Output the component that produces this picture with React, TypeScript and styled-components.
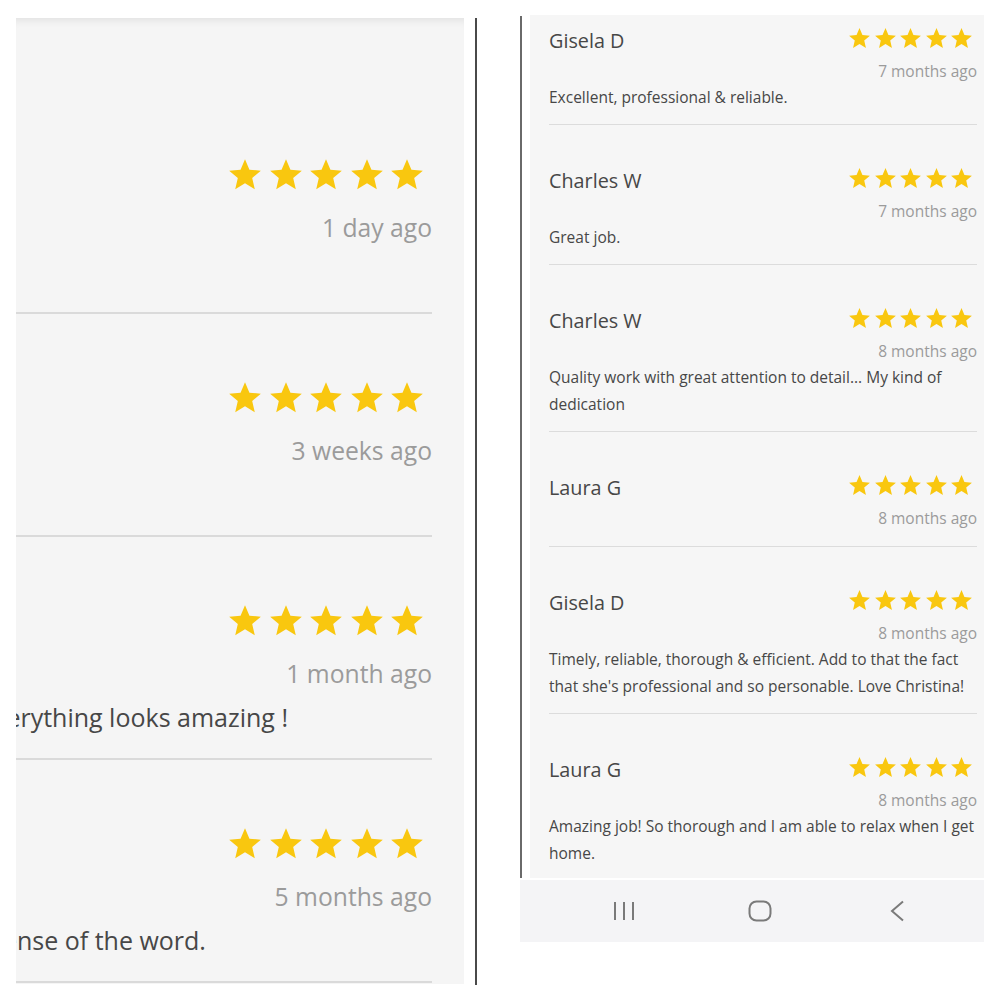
import styled, { createGlobalStyle } from "styled-components";

const GlobalStyle = createGlobalStyle`
  body {
    margin: 0;
    background: #ffffff;
    font-family: "Open Sans", "Noto Sans", sans-serif;
  }
`

const Page = styled.div`
  display: flex;
  height: 1000px;
  background: #ffffff;
  overflow: hidden;
`

// left screenshot (zoomed in, cut on the left)
const LeftPanel = styled.section`
  margin: 18px 0 0 16px;
  width: 448px;
  height: 966px;
  background: #f5f5f5;
  box-shadow: inset 0 9px 8px -7px rgba(0, 0, 0, 0.09);
  overflow: hidden;
`

const LeftList = styled.div`
  margin-left: -36px;
  padding: 73px 32px 0 0;
`

const LeftRow = styled.div`
  padding: 64px 0 21px;
  border-bottom: 2px solid #dadada;
`

const Rule = styled.div<{ $top: number; $height: number; $color: string }>`
  flex: none;
  width: 2px;
  margin-top: ${(p) => p.$top}px;
  height: ${(p) => p.$height}px;
  background: ${(p) => p.$color};
`

const Gap = styled.div<{ $w: number }>`
  flex: none;
  width: ${(p) => p.$w}px;
`

const StarRow = styled.div<{ $size: number; $gap: number; $right: number; $big?: boolean }>`
  display: flex;
  align-items: center;
  justify-content: flex-end;
  gap: ${(p) => p.$gap}px;
  margin-right: ${(p) => p.$right}px;
  height: ${(p) => (p.$big ? 40 : 25)}px;
  margin-bottom: ${(p) => (p.$big ? 0 : 4)}px;
  svg {
    width: ${(p) => p.$size}px;
    height: ${(p) => p.$size}px;
    fill: #f9c70f;
    display: block;
  }
`

const Time = styled.div<{ $big?: boolean }>`
  text-align: right;
  color: #9b9b9b;
  font-size: ${(p) => (p.$big ? 24.7 : 15.5)}px;
  line-height: ${(p) => (p.$big ? 36 : 24)}px;
  margin-top: ${(p) => (p.$big ? 15 : 5)}px;
`

const Body = styled.div<{ $big?: boolean; $indent?: number }>`
  color: #474747;
  font-size: ${(p) => (p.$big ? 25 : 15.5)}px;
  line-height: ${(p) => (p.$big ? 40 : 27)}px;
  min-height: ${(p) => (p.$big ? 40 : 0)}px;
  margin-top: ${(p) => (p.$big ? 5 : 1)}px;
  white-space: ${(p) => (p.$big ? "nowrap" : "normal")};
  text-indent: ${(p) => p.$indent ?? 0}px;
`

// right screenshot
const RightColumn = styled.div`
  flex: none;
  width: 464px;
  margin-top: 15px;
  display: flex;
  flex-direction: column;
`

const Upper = styled.div`
  display: flex;
  height: 863px;
`

const RightPanel = styled.section`
  flex: 1;
  background: #f6f6f6;
  overflow: hidden;
  padding: 0 7px 0 19px;
`

const RightList = styled.div`
  margin-top: -30px;
`

const RightRow = styled.div<{ $empty?: boolean }>`
  padding: 41px 0 ${(p) => (p.$empty ? 16 : 13)}px;
  border-bottom: 1px solid #dcdcdc;
`

const Header = styled.div`
  display: flex;
  align-items: center;
  justify-content: space-between;
  height: 28px;
`

const Name = styled.div`
  font-size: 19.8px;
  color: #474747;
`

const NavBar = styled.nav`
  height: 62px;
  margin-top: 2px;
  background: #f4f4f6;
  display: flex;
  align-items: center;
  gap: 96px;
  padding-left: 84px;
  svg {
    width: 40px;
    height: 24px;
    stroke: #7a7a7a;
    stroke-width: 2;
    fill: none;
  }
`

const Star = () => (
  <svg viewBox="0 0 24 24">
    <path d="M12 17.27L18.18 21l-1.64-7.03L22 9.24l-7.19-.61L12 2 9.19 8.63 2 9.24l5.46 4.73L5.82 21z" />
  </svg>
);

const Stars = ({ big }: { big?: boolean }) => (
  <StarRow $big={big} $size={big ? 38 : 25} $gap={big ? 2.5 : 0.5} $right={big ? 6 : 3}>
    {[0, 1, 2, 3, 4].map((i) => (
      <Star key={i} />
    ))}
  </StarRow>
);

const leftReviews = [
  { time: "1 day ago", body: "", indent: 0 },
  { time: "3 weeks ago", body: "", indent: 0 },
  { time: "1 month ago", body: "Everything looks amazing !", indent: 0 },
  { time: "5 months ago", body: "sense of the word.", indent: 11 },
];

const rightReviews = [
  { name: "Gisela D", time: "7 months ago", body: "Excellent, professional & reliable." },
  { name: "Charles W", time: "7 months ago", body: "Great job." },
  { name: "Charles W", time: "8 months ago", body: "Quality work with great attention to detail... My kind of dedication" },
  { name: "Laura G", time: "8 months ago", body: "" },
  { name: "Gisela D", time: "8 months ago", body: "Timely, reliable, thorough & efficient. Add to that the fact that she's professional and so personable. Love Christina!" },
  { name: "Laura G", time: "8 months ago", body: "Amazing job! So thorough and I am able to relax when I get home." },
];

function App() {
  return (
    <Page>
      <GlobalStyle />
      <LeftPanel>
        <LeftList>
          {leftReviews.map((r, i) => (
            <LeftRow key={i}>
              <Stars big />
              <Time $big>{r.time}</Time>
              <Body $big $indent={r.indent}>{r.body}</Body>
            </LeftRow>
          ))}
        </LeftList>
      </LeftPanel>
      <Gap $w={11} />
      <Rule $top={18} $height={967} $color="#4a4a4a" />
      <Gap $w={43} />
      <RightColumn>
        <Upper>
          <Rule $top={1} $height={862} $color="#6a6a6a" />
          <Gap $w={8} />
          <RightPanel>
            <RightList>
              {rightReviews.map((r, i) => (
                <RightRow key={i} $empty={!r.body}>
                  <Header>
                    <Name>{r.name}</Name>
                    <Stars />
                  </Header>
                  <Time>{r.time}</Time>
                  {r.body && <Body>{r.body}</Body>}
                </RightRow>
              ))}
            </RightList>
          </RightPanel>
        </Upper>
        <NavBar>
          <svg viewBox="0 0 40 24">
            <path d="M11 3v18M20 3v18M29 3v18" />
          </svg>
          <svg viewBox="0 0 40 24">
            <rect x="9.5" y="2.5" width="21" height="19" rx="7" />
          </svg>
          <svg viewBox="0 0 40 24">
            <path d="M27 2.5L16 12l11 9.5" />
          </svg>
        </NavBar>
      </RightColumn>
    </Page>
  );
}

export default App;
